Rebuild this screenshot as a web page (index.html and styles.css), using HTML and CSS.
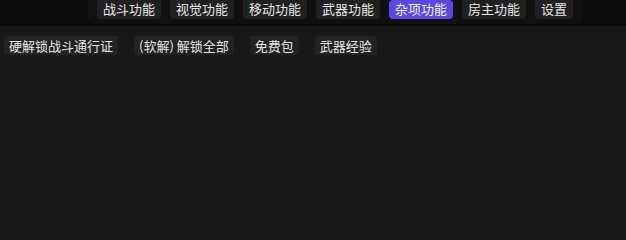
FILE: index.html
```html
<!DOCTYPE html>
<html lang="zh">
<head>
<meta charset="utf-8">
<link rel="stylesheet" href="styles.css">
</head>
<body>
<div class="top">
  <nav class="tabs">
    <span class="tab">战斗功能</span>
    <span class="tab">视觉功能</span>
    <span class="tab">移动功能</span>
    <span class="tab">武器功能</span>
    <span class="tab active">杂项功能</span>
    <span class="tab">房主功能</span>
    <span class="tab">设置</span>
  </nav>
</div>
<main class="panel">
  <div class="row">
    <span class="btn">硬解锁战斗通行证</span>
    <span class="btn">(软解) 解锁全部</span>
    <span class="btn">免费包</span>
    <span class="btn">武器经验</span>
  </div>
</main>
</body>
</html>
```

FILE: styles.css
```css
html, body {
  margin: 0;
  padding: 0;
  height: 100%;
}
body {
  background: #0b0b0b;
  font-family: "Noto Sans CJK SC", "Noto Sans", sans-serif;
  font-size: 13px;
  color: #e6e6e6;
  display: flex;
  flex-direction: column;
}
.top {
  height: 26px;
  display: flex;
  align-items: flex-start;
}
.tabs {
  margin-left: 88px;
  width: 494px;
  box-sizing: border-box;
  height: 24px;
  background: #111111;
  border-radius: 0 0 6px 6px;
  display: flex;
  justify-content: center;
  align-items: flex-start;
  gap: 9px;
  padding: 0;
}
.tab {
  background: #202020;
  border-radius: 0 0 4px 4px;
  padding: 0 6px;
  height: 19px;
  line-height: 18px;
  white-space: nowrap;
}
.tab.active {
  background: #5a48e0;
  border-radius: 4px;
  color: #f0f0f0;
}
.panel {
  flex: 1;
  background: #181818;
  padding: 10px 4px;
}
.row {
  display: flex;
  gap: 16px;
}
.btn {
  background: #222222;
  border-radius: 3px;
  padding: 0 5px;
  height: 19px;
  line-height: 19px;
  white-space: nowrap;
}
```
